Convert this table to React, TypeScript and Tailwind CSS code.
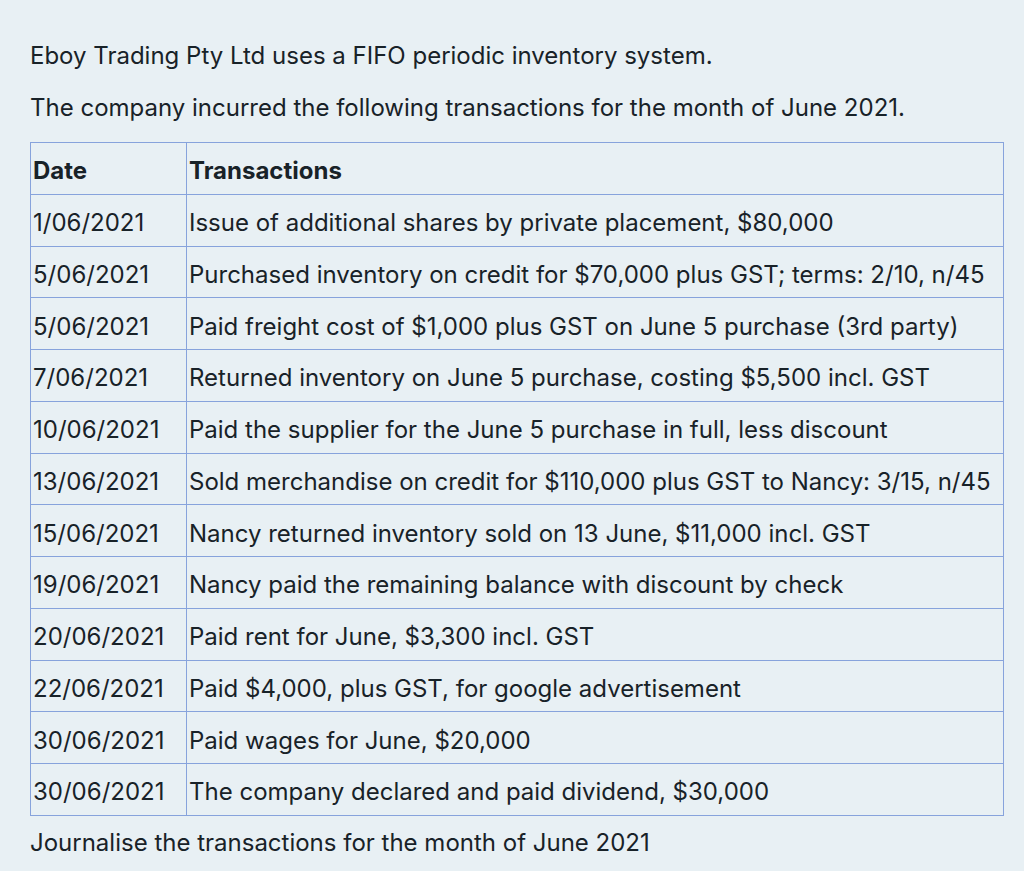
const rows: [string, string][] = [
  ["1/06/2021", "Issue of additional shares by private placement, $80,000"],
  ["5/06/2021", "Purchased inventory on credit for $70,000 plus GST; terms: 2/10, n/45"],
  ["5/06/2021", "Paid freight cost of $1,000 plus GST on June 5 purchase (3rd party)"],
  ["7/06/2021", "Returned inventory on June 5 purchase, costing $5,500 incl. GST"],
  ["10/06/2021", "Paid the supplier for the June 5 purchase in full, less discount"],
  ["13/06/2021", "Sold merchandise on credit for $110,000 plus GST to Nancy: 3/15, n/45"],
  ["15/06/2021", "Nancy returned inventory sold on 13 June, $11,000 incl. GST"],
  ["19/06/2021", "Nancy paid the remaining balance with discount by check"],
  ["20/06/2021", "Paid rent for June, $3,300 incl. GST"],
  ["22/06/2021", "Paid $4,000, plus GST, for google advertisement"],
  ["30/06/2021", "Paid wages for June, $20,000"],
  ["30/06/2021", "The company declared and paid dividend, $30,000"],
];

export default function App() {
  return (
    <div className="min-h-[871px] w-[1024px] bg-[#e8f0f4] px-[30px] pt-[39px] font-['Inter',sans-serif] text-[24px] text-[#182228]">
      <p className="leading-[34px]">Eboy Trading Pty Ltd uses a FIFO periodic inventory system.</p>
      <p className="mt-[18px] leading-[34px]">The company incurred the following transactions for the month of June 2021.</p>
      <table className="mt-[17px] w-[974px] border-collapse">
        <thead>
          <tr className="h-[51.75px]">
            <th className="w-[156px] border border-[#87a3dc] px-[2px] pt-[6px] text-left font-bold">Date</th>
            <th className="border border-[#87a3dc] px-[2px] pt-[6px] text-left font-bold">Transactions</th>
          </tr>
        </thead>
        <tbody>
          {rows.map(([d, t], i) => (
            <tr key={i} className="h-[51.75px]">
              <td className="border border-[#87a3dc] px-[2px] pt-[6px] whitespace-nowrap">{d}</td>
              <td className="border border-[#87a3dc] px-[2px] pt-[6px] whitespace-nowrap">{t}</td>
            </tr>
          ))}
        </tbody>
      </table>
      <p className="mt-[10px] leading-[34px]">Journalise the transactions for the month of June 2021</p>
    </div>
  );
}
